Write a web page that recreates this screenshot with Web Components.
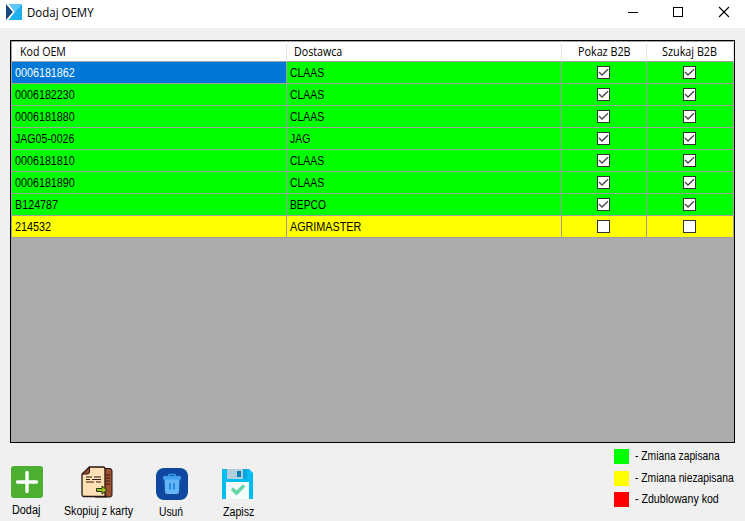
<!DOCTYPE html>
<html lang="pl"><head><meta charset="utf-8"><title>Dodaj OEMY</title>
<style>html,body{margin:0;height:100%;overflow:hidden}</style></head>
<body><oem-window></oem-window>
<script>
// Text label scaled horizontally to the width given in its "w" attribute.
class FitText extends HTMLElement{
  connectedCallback(){
    const r=this.attachShadow({mode:'open'});
    r.innerHTML='<style>:host{display:block;white-space:nowrap;text-align:left}span{display:inline-block;transform-origin:0 50%}</style><span><slot></slot></span>';
    const s=r.querySelector('span'),w=+this.getAttribute('w');
    this.style.width=w+'px';
    s.style.transform='scaleX('+w/s.offsetWidth+')';
  }
}
class TitleBar extends HTMLElement{
  connectedCallback(){
    this.attachShadow({mode:'open'}).innerHTML=`<style>
    :host{display:flex;height:28px;background:#fff;font:12px/16px "Open Sans","Noto Sans",sans-serif;color:#000;box-sizing:border-box;padding:4px 15px 0 6px;align-items:flex-start}
    fit-text{margin:1px auto 0 5px}
    .logo{flex:none}.buttons{margin-top:2px}
    </style>
    <svg class="logo" width="16" height="16"><path fill="#5cc8f7" d="M2.500 0H16L8.500 8Z"/><path fill="#1fb0ee" d="M16 0V16H2.500L8.500 8Z"/><path fill="#174a7c" d="M0 0L7 8L0 16Z"/><path stroke="#fff" stroke-width="1.300" fill="none" d="M1 -.5L8 8L1 16.500"/></svg>
    <fit-text w="67">Dodaj OEMY</fit-text>
    <svg class="buttons" width="103" height="13" fill="none" stroke="#000"><path d="M1 6.500H11"/><rect x="46.500" y="1.500" width="9" height="9"/><path d="M92 1L102 11M102 1L92 11" stroke-width="1.100"/></svg>`;
  }
}
class CheckBox extends HTMLElement{
  connectedCallback(){
    this.attachShadow({mode:'open'}).innerHTML=`<style>:host{display:block;width:13px;height:13px}svg{display:block}</style>
    <svg width="13" height="13" fill="none"><rect x=".5" y=".5" width="12" height="12" fill="#fff" stroke="#333"/>${this.hasAttribute('checked')?'<path d="M2 6L5 9L11 3.200" stroke="#444" stroke-width="1.250"/>':''}</svg>`;
  }
}
class OemGrid extends HTMLElement{
  connectedCallback(){
    const rows=[['0006181862',60,'CLAAS',34],['0006182230',60,'CLAAS',34],['0006181880',60,'CLAAS',34],['JAG05-0026',59,'JAG',20],['0006181810',60,'CLAAS',34],['0006181890',60,'CLAAS',34],['B124787',43,'BEPCO',36],['214532',36,'AGRIMASTER',71]];
    this.attachShadow({mode:'open'}).innerHTML=`<style>
    :host{display:block;box-sizing:border-box;width:725px;height:403px;border:1px solid #000;background:#ababab;color:#000;font:12px/16px "Liberation Sans",Arial,sans-serif}
    .row{display:grid;grid-template-columns:276px 275px 85px 87px;height:22px;background:#0f0;box-shadow:inset 1px 0 #a0a0a0}
    .row>div{box-sizing:border-box;border-right:1px solid #a0a0a0;border-bottom:1px solid #a0a0a0;display:flex;align-items:center;padding-left:2.500px}
    .row>div:first-child{padding-left:3px;margin-left:1px}
    .row>.box{justify-content:center;padding:0 2px 0 0}.row>.last{padding:0 1px 0 0}
    .head{height:21px;background:#fff;font-family:"Open Sans","Noto Sans",sans-serif;box-shadow:inset 1px 1px #a0a0a0}
    .head>div,.row.head>div:first-child{padding:1px 0 0 8px;border-right-color:#e5e5e5}
    .head>div:nth-child(2){padding-left:7px}
    .head>.box{padding:1px 0 0}.head>.last{padding:1px 1px 0 0}
    .chosen{background:#0078d7;color:#fff}
    .unsaved{background:#ff0}
    </style>
    <div class="row head"><div><fit-text w="46">Kod OEM</fit-text></div><div><fit-text w="48">Dostawca</fit-text></div><div class="box"><fit-text w="53">Pokaz B2B</fit-text></div><div class="box last"><fit-text w="55">Szukaj B2B</fit-text></div></div>
    ${rows.map((r,i)=>{const c=`<check-box ${i<7?'checked':''}></check-box>`;return `<div class="row ${i==7?'unsaved':''}"><div class="${i?'':'chosen'}"><fit-text w="${r[1]}">${r[0]}</fit-text></div><div><fit-text w="${r[3]}">${r[2]}</fit-text></div><div class="box">${c}</div><div class="box last">${c}</div></div>`}).join('')}`;
  }
}
const icons={
add:'<rect width="32" height="32" rx="3" fill="#4caf32"/><path d="M16 6.500V25.500M6.500 16H25.500" stroke="#fff" stroke-width="3.400" stroke-linecap="round"/>',
copy:'<path d="M18 2.500H29Q31 2.500 31 5V29Q31 31 29 31H14V7Z" fill="#9c5133" stroke="#24150f"/><path d="M25 9H29M25 12H29M25 15H29M25 18H29" stroke="#40180f"/><path d="M8.500 1H22Q24 1 24 3V28Q24 30.500 26 30.500H3Q1 30.500 1 28V8Z" fill="#ffdfb4" stroke="#24150f" stroke-width="1.300"/><path d="M8.500 1V6Q8.500 8 6 8H1Z" fill="#91482f" stroke="#24150f"/><path d="M5 11H11M13 11H20M5 13.500H9M11 13.500H20M5 16H13M15 16H20" stroke="#2d1b14" stroke-width="1.200"/><path d="M15.500 22.500H21V20L26 24L21 28V25.500H15.500Z" fill="#9bc51b" stroke="#25330a"/>',
trash:'<rect width="32" height="32" rx="8" fill="#0e48a0"/><path d="M12.500 8V7.500Q12.500 6.500 13.500 6.500H18.500Q19.500 6.500 19.500 7.500V8" fill="none" stroke="#3f9cf2" stroke-width="1.300"/><path d="M8.500 11H23.500L23 24Q23 26 21 26H11Q9 26 9 24Z" fill="#64b5f6"/><rect x="7" y="8" width="18" height="3.500" rx="1.200" fill="#419ff0"/><path d="M14 15V21.500M18 15V21.500" stroke="#2386e5" stroke-width="1.800"/>',
save:'<path d="M0 1H27L31 5V31H0Z" fill="#00bcf5"/><path d="M5 1H21V11H5Z" fill="#b0cfdb"/><path d="M21 1H25V11H21Z" fill="#0aa5dc"/><path d="M15 3H19V9H15Z" fill="#087fae"/><path d="M4 14H27V31H4Z" fill="#f5fcfc"/><path d="M10 20.500L14.500 25L22 17.500" fill="none" stroke="#65d7a4" stroke-width="3.400"/>'};
class ToolButton extends HTMLElement{
  connectedCallback(){
    this.attachShadow({mode:'open'}).innerHTML=`<style>:host{display:flex;flex-direction:column;align-items:center;font:12px/16px "Liberation Sans",Arial,sans-serif;color:#000}svg{display:block;margin-bottom:var(--gap,4px);margin-left:var(--shift,0)}fit-text{margin-right:var(--nudge,0)}</style>
    <svg width="32" height="32">${icons[this.getAttribute('icon')]}</svg><fit-text w="${this.getAttribute('w')}">${this.getAttribute('label')}</fit-text>`;
  }
}
class StatusLegend extends HTMLElement{
  connectedCallback(){
    this.attachShadow({mode:'open'}).innerHTML=`<style>:host{display:flex;flex-direction:column;gap:6.500px;font:12px/15px "Liberation Sans",Arial,sans-serif;color:#000}div{display:flex;gap:6px}i{width:15px;height:15px}</style>
    <div><i style="background:#0f0"></i><fit-text w="85">- Zmiana zapisana</fit-text></div><div><i style="background:#ff0"></i><fit-text w="99">- Zmiana niezapisana</fit-text></div><div><i style="background:#f00"></i><fit-text w="84">- Zdublowany kod</fit-text></div>`;
  }
}
class OemWindow extends HTMLElement{
  connectedCallback(){
    this.attachShadow({mode:'open'}).innerHTML=`<style>
    :host{display:block;width:745px;height:521px;background:#f0f0f0;overflow:hidden}
    oem-grid{margin:12px 0 0 10px}
    footer{display:flex;padding-left:11px;align-items:flex-start}
    tool-button:nth-child(1){margin-top:23px;width:32px;--gap:4px;--nudge:2px}
    tool-button:nth-child(2){margin:23px 0 0 21px;width:69px;--shift:-4px;--gap:5px}
    tool-button:nth-child(3){margin:25px 0 0 23px;width:32px;--gap:4px;--nudge:2px}
    tool-button:nth-child(4){margin:25px 0 0 34px;width:32px;--gap:4px}
    status-legend{margin:6px 11px 0 auto}
    </style><title-bar></title-bar><oem-grid></oem-grid>
    <footer><tool-button icon="add" label="Dodaj" w="28"></tool-button><tool-button icon="copy" label="Skopiuj z karty" w="69"></tool-button><tool-button icon="trash" label="Usuń" w="24"></tool-button><tool-button icon="save" label="Zapisz" w="31"></tool-button><status-legend></status-legend></footer>`;
  }
}
customElements.define('fit-text',FitText);
customElements.define('title-bar',TitleBar);
customElements.define('check-box',CheckBox);
customElements.define('oem-grid',OemGrid);
customElements.define('tool-button',ToolButton);
customElements.define('status-legend',StatusLegend);
customElements.define('oem-window',OemWindow);
</script></body></html>
